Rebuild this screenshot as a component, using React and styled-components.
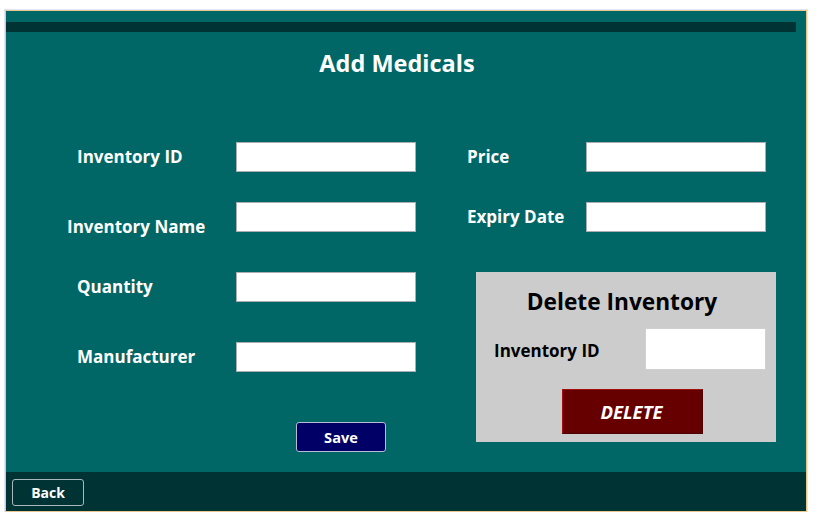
import React from "react";
import styled, { createGlobalStyle } from "styled-components";

const Global = createGlobalStyle`
  html, body { margin: 0; padding: 0; background: #ffffff; }
  body { font-family: "Open Sans", "Noto Sans", "Liberation Sans", sans-serif; }
  * { box-sizing: border-box; }
`;

const Frame = styled.div`
  margin: 10px 0 0 5px;
  width: 802px;
  height: 502px;
  border: 1px solid #e8c88e;
  box-shadow: 0 0 0 1px #e4e4f6;
  background: #006666;
  display: flex;
  flex-direction: column;
`;

const TopBar = styled.div`
  margin: 11px 10px 0 0;
  height: 10px;
  background: #003333;
  flex: none;
`;

const Main = styled.main`
  flex: 1;
  display: flex;
  flex-direction: column;
`;

const Title = styled.h1`
  margin: 16px 0 0;
  text-align: center;
  color: #ffffff;
  font-size: 23.5px;
  line-height: 30px;
  font-weight: 700;
  padding-right: 18px;
`;

const Body = styled.div`
  margin-top: 64px;
  display: flex;
  align-items: flex-start;
`;

const LeftForm = styled.div`
  padding-left: 71px;
  width: 461px;
  display: flex;
  flex-direction: column;
`;

const RightForm = styled.div`
  display: flex;
  flex-direction: column;
`;

const FieldRow = styled.div`
  display: grid;
  grid-template-columns: ${(p) => p.$labelWidth}px 180px;
  align-items: center;
  height: 30px;
  margin-top: ${(p) => p.$top || 0}px;
`;

const Label = styled.label`
  color: #ffffff;
  font-size: 17px;
  font-weight: 700;
  white-space: nowrap;
  margin-left: ${(p) => p.$shiftX || 0}px;
  transform: translateY(${(p) => (p.$shiftY || 0) - 1}px);
`;

const Input = styled.input`
  width: 180px;
  height: 30px;
  border: 1px solid #abadb3;
  background: #ffffff;
  outline: none;
  padding: 0 4px;
`;

const SaveButton = styled.button`
  margin: 50px 0 0 219px;
  width: 90px;
  height: 30px;
  background: #000066;
  color: #ffffff;
  border: 1px solid #b9bcd4;
  border-radius: 3px;
  font-family: inherit;
  font-weight: 700;
  font-size: 14.6px;
  padding: 0;
`;

const DeletePanel = styled.section`
  margin: 40px 0 0 9px;
  width: 300px;
  height: 170px;
  background: #cccccc;
  display: flex;
  flex-direction: column;
  padding: 15px 11px 0 18px;
`;

const PanelTitle = styled.h2`
  margin: 0;
  text-align: center;
  font-size: 22.7px;
  line-height: 30px;
  font-weight: 700;
  color: #000000;
  padding-right: 15px;
`;

const PanelRow = styled.div`
  margin-top: 11px;
  display: flex;
  align-items: center;
  justify-content: space-between;
`;

const PanelLabel = styled.label`
  font-size: 17px;
  font-weight: 700;
  color: #000000;
  transform: translateY(1px);
`;

const PanelInput = styled.input`
  width: 121px;
  height: 42px;
  border: 1px solid #d0d0d0;
  background: #ffffff;
  outline: none;
  margin-right: -1px;
`;

const DeleteButton = styled.button`
  margin: 19px 0 0 68px;
  width: 141px;
  height: 45px;
  background: #660000;
  border: 1px solid #a01010;
  border-right-color: #4a0000;
  border-bottom-color: #4a0000;
  color: #ffffff;
  font-family: inherit;
  font-style: italic;
  font-weight: 700;
  font-size: 18.5px;
  padding: 0 2px 0 0;
`;

const Footer = styled.footer`
  flex: none;
  height: 39px;
  background: #003333;
  padding: 7px 0 0 6px;
`;

const BackButton = styled.button`
  width: 72px;
  height: 27px;
  background: transparent;
  border: 1px solid #a9b8b8;
  border-radius: 3px;
  color: #ffffff;
  font-family: inherit;
  font-weight: 700;
  font-size: 14px;
  padding: 0;
`;

export default function App() {
  return (
    <>
      <Global />
      <Frame>
        <TopBar />
        <Main>
          <Title>Add Medicals</Title>
          <Body>
            <LeftForm>
              <FieldRow $labelWidth={159}>
                <Label>Inventory ID</Label>
                <Input />
              </FieldRow>
              <FieldRow $labelWidth={159} $top={30}>
                <Label $shiftX={-10} $shiftY={10}>Inventory Name</Label>
                <Input />
              </FieldRow>
              <FieldRow $labelWidth={159} $top={40}>
                <Label>Quantity</Label>
                <Input />
              </FieldRow>
              <FieldRow $labelWidth={159} $top={40}>
                <Label>Manufacturer</Label>
                <Input />
              </FieldRow>
              <SaveButton>Save</SaveButton>
            </LeftForm>
            <RightForm>
              <FieldRow $labelWidth={119}>
                <Label>Price</Label>
                <Input />
              </FieldRow>
              <FieldRow $labelWidth={119} $top={30}>
                <Label>Expiry Date</Label>
                <Input />
              </FieldRow>
              <DeletePanel>
                <PanelTitle>Delete Inventory</PanelTitle>
                <PanelRow>
                  <PanelLabel>Inventory ID</PanelLabel>
                  <PanelInput />
                </PanelRow>
                <DeleteButton>DELETE</DeleteButton>
              </DeletePanel>
            </RightForm>
          </Body>
        </Main>
        <Footer>
          <BackButton>Back</BackButton>
        </Footer>
      </Frame>
    </>
  );
}
